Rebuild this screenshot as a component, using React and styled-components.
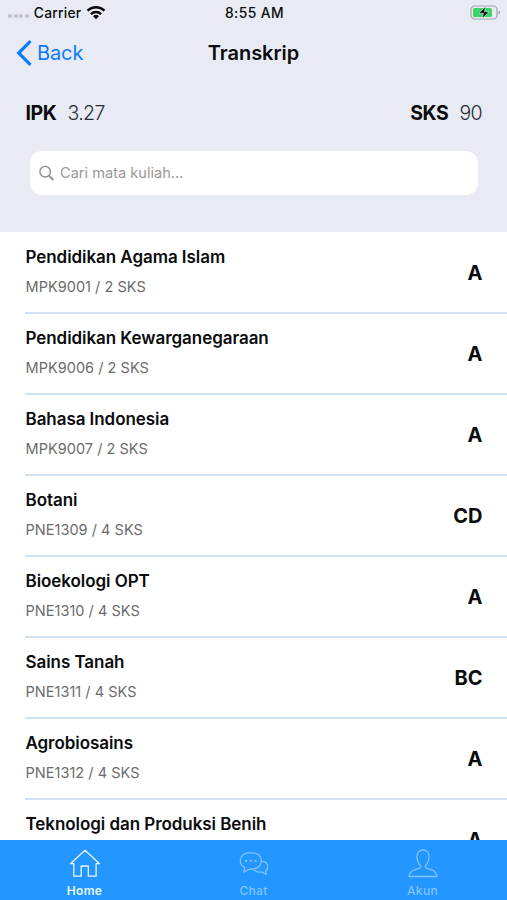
import styled, { createGlobalStyle } from "styled-components";

const GlobalStyle = createGlobalStyle`
  * {
    box-sizing: border-box;
  }
  body {
    margin: 0;
    font-family: Inter, "Liberation Sans", sans-serif;
    color: #0b0c0e;
  }
`;

const Screen = styled.div`
  display: flex;
  flex-direction: column;
  height: 900px;
  background-color: #fff;
  overflow: hidden;
`;

const Header = styled.header`
  flex: none;
  height: 232px;
  background-color: #e8ebf4;
`;

const StatusBar = styled.div`
  display: grid;
  grid-template-columns: 1fr auto 1fr;
  align-items: center;
  height: 26px;
  padding: 0 6px 1px 8px;
  font-size: 13.8px;
  font-weight: 500;
`;

const Carrier = styled.div`
  display: flex;
  align-items: center;
  gap: 5px;
  letter-spacing: 0.25px;
`;

const Clock = styled.div`
  letter-spacing: 0.45px;
`;

const SignalDots = styled.div`
  display: flex;
  gap: 1.6px;
  padding-top: 7px;

  span {
    width: 4px;
    height: 4px;
    border-radius: 50%;
    background-color: #bfc2ca;
  }
`;

const BatteryIcon = styled.svg`
  justify-self: end;
`;

const NavBar = styled.nav`
  display: grid;
  grid-template-columns: 1fr auto 1fr;
  align-items: center;
  height: 52px;
  padding: 1px 16px 0;
`;

const BackButton = styled.button`
  display: flex;
  align-items: center;
  gap: 5px;
  padding: 0;
  border: 0;
  background: none;
  color: #0a7cff;
  font-family: inherit;
  font-size: 20px;
  letter-spacing: -0.1px;
`;

const Title = styled.h1`
  margin: 0;
  font-size: 20px;
  font-weight: 600;
  letter-spacing: -0.05px;
`;

const Summary = styled.div`
  display: flex;
  justify-content: space-between;
  align-items: center;
  height: 70px;
  padding: 0 25px 0 25.5px;
`;

const Stat = styled.div`
  display: flex;
  gap: 11px;
  font-size: 19.5px;
  letter-spacing: -0.4px;
  color: #2b2e35;

  b {
    color: #0b0c0e;
    font-weight: 700;
  }
  span {
    font-weight: 300;
    letter-spacing: -0.6px;
  }
`;

const SearchBox = styled.label`
  display: flex;
  align-items: center;
  gap: 6px;
  height: 44px;
  margin: 3px 29px 0 30px;
  padding: 0 9px;
  border-radius: 12px;
  background-color: #fff;
`;

const SearchInput = styled.input`
  flex: 1;
  padding: 0 0 1px;
  border: 0;
  outline: 0;
  background: none;
  font-family: inherit;
  font-size: 14.6px;
  &::placeholder {
    color: #999;
    opacity: 1;
  }
`;

const CourseList = styled.ul`
  flex: 1;
  min-height: 0;
  margin: 0;
  padding: 1px 0 0 25px;
  list-style: none;
  overflow: hidden;
`;

const Course = styled.li`
  display: flex;
  justify-content: space-between;
  height: 81px;
  padding: 12px 24.5px 0 0.5px;
  border-bottom: 2px solid #d3e3f3;
`;

const CourseName = styled.div`
  font-size: 17px;
  font-weight: 600;
  line-height: 24px;
  letter-spacing: -0.06px;
`;

const CourseInfo = styled.div`
  margin-top: 8px;
  color: #6c6c6c;
  font-size: 14.5px;
  line-height: 20px;
  letter-spacing: 0.03px;
`;

const Grade = styled.div`
  padding-top: 16px;
  font-size: 20px;
  font-weight: 700;
  line-height: 24px;
`;

const TabBar = styled.nav`
  flex: none;
  display: grid;
  grid-template-columns: repeat(3, 1fr);
  height: 60px;
  background-color: #2496ff;
`;

const Tab = styled.div`
  display: flex;
  flex-direction: column;
  align-items: center;
  padding-top: 8px;
  color: ${(props) => (props.$active ? "#e9f6ff" : "#7fc3ff")};
  font-size: 12px;
  font-weight: ${(props) => (props.$active ? 600 : 500)};
  line-height: 16px;
  letter-spacing: 0.3px;

  svg {
    margin-bottom: 5px;
    fill: none;
    stroke: currentColor;
    stroke-width: 1.3;
    stroke-linejoin: round;
    stroke-linecap: round;
  }
`;

const courses = [
  { code: "MPK9001", name: "Pendidikan Agama Islam", sks: 2, grade: "A" },
  { code: "MPK9006", name: "Pendidikan Kewarganegaraan", sks: 2, grade: "A" },
  { code: "MPK9007", name: "Bahasa Indonesia", sks: 2, grade: "A" },
  { code: "PNE1309", name: "Botani", sks: 4, grade: "CD" },
  { code: "PNE1310", name: "Bioekologi OPT", sks: 4, grade: "A" },
  { code: "PNE1311", name: "Sains Tanah", sks: 4, grade: "BC" },
  { code: "PNE1312", name: "Agrobiosains", sks: 4, grade: "A" },
  { name: "Teknologi dan Produksi Benih", grade: "A" },
];

function WifiIcon() {
  return (
    <svg width="20" height="15" viewBox="0 0 20 15" fill="none" stroke="#0b0c0e" strokeWidth="2.5">
      <path d="M1.5 5.6a12.2 12.2 0 0 1 17 0" />
      <path d="M4.9 9.1a7.3 7.3 0 0 1 10.2 0" />
      <path d="M10 14.3 7 11.3a4.3 4.3 0 0 1 6 0Z" fill="#0b0c0e" stroke="none" />
    </svg>
  );
}

function Battery() {
  return (
    <BatteryIcon width="31" height="16" viewBox="0 0 31 16">
      <rect x="1" y="1" width="26" height="13" rx="3.6" fill="none" stroke="#a2a5ab" strokeWidth="1.2" />
      <rect x="3" y="3" width="19" height="9" rx="1.6" fill="#39d567" />
      <path d="M28.5 5.5v4q1.6-.6 1.6-2t-1.6-2Z" fill="#a2a5ab" />
      <path d="M15.6 1.7 8.8 8.3h4.6l-1.1 5 6.8-6.6h-4.6Z" fill="#0b0c0e" stroke="#e8ebf4" strokeWidth=".6" />
    </BatteryIcon>
  );
}

function HomeIcon() {
  return (
    <svg width="32" height="30" viewBox="0 0 32 30">
      <path d="M16 2.3 1.5 15.7h3.3v12.5h7.4V18h7.1v10.2h7.8V15.7h3.4Z" />
    </svg>
  );
}

function ChatIcon() {
  return (
    <svg width="32" height="30" viewBox="0 0 32 30">
      <path d="M11 4.8h3.5c5 0 8.900 3.300 8.900 8s-3.900 8.200-8.900 8.200h-2.500l-6.200 3.300 1-4.800c-2.900-1.400-4.500-3.800-4.500-6.700 0-4.700 3.900-8 8.700-8Z" />
      <path d="M24 13.400c3.600.3 5.800 2.500 5.800 5.500 0 1.800-.9 3.200-2.300 4.200l.6 3.200-4-2.100h-2.600c-2.300 0-4.200-.9-5.200-2.400" />
      <path d="M8 12.900h.1M12.800 12.900h.1M17.600 12.900h.1" strokeWidth="2.200" />
    </svg>
  );
}

function PersonIcon() {
  return (
    <svg width="32" height="30" viewBox="0 0 32 30">
      <path d="M16 2c-4 0-6.200 2.700-6 6.500.1 4.200 1.200 6.600 3.200 8.800.8 1.500.2 2.800-1.700 3.300-5 1.300-8.900 2.300-9.500 7.900h28c-.6-5.600-4.500-6.600-9.500-7.900-1.900-.5-2.500-1.800-1.700-3.300 2-2.200 3.100-4.600 3.200-8.800C22.200 4.700 20 2 16 2Z" />
    </svg>
  );
}

function App() {
  return (
    <>
      <GlobalStyle />
      <Screen>
        <Header>
          <StatusBar>
            <Carrier>
              <SignalDots>
                <span />
                <span />
                <span />
                <span />
              </SignalDots>
              Carrier
              <WifiIcon />
            </Carrier>
            <Clock>8:55 AM</Clock>
            <Battery />
          </StatusBar>
          <NavBar>
            <BackButton>
              <svg width="16" height="26" viewBox="0 0 16 26" fill="none" stroke="currentColor" strokeWidth="3.2">
                <path d="M14.500 1.200 2.700 13l11.800 11.800" />
              </svg>
              Back
            </BackButton>
            <Title>Transkrip</Title>
          </NavBar>
          <Summary>
            <Stat>
              <b>IPK</b>
              <span>3.27</span>
            </Stat>
            <Stat>
              <b>SKS</b>
              <span>90</span>
            </Stat>
          </Summary>
          <SearchBox>
            <svg width="15" height="16" viewBox="0 0 15 16" fill="none" stroke="#8c8c8c" strokeWidth="1.4">
              <circle cx="6.200" cy="6.700" r="5.300" />
              <path d="m10 10.700 4.300 4.300" strokeWidth="1.800" />
            </svg>
            <SearchInput placeholder="Cari mata kuliah..." />
          </SearchBox>
        </Header>
        <CourseList>
          {courses.map((course) => (
            <Course key={course.name}>
              <div>
                <CourseName>{course.name}</CourseName>
                {course.code && (
                  <CourseInfo>
                    {course.code} / {course.sks} SKS
                  </CourseInfo>
                )}
              </div>
              <Grade>{course.grade}</Grade>
            </Course>
          ))}
        </CourseList>
        <TabBar>
          <Tab $active>
            <HomeIcon />
            Home
          </Tab>
          <Tab>
            <ChatIcon />
            Chat
          </Tab>
          <Tab>
            <PersonIcon />
            Akun
          </Tab>
        </TabBar>
      </Screen>
    </>
  );
}

export default App;
